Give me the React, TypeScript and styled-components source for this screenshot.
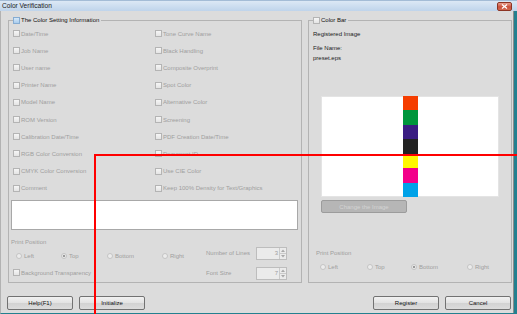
import styled, { createGlobalStyle } from 'styled-components'

const GlobalStyle = createGlobalStyle`
  html, body {
    margin: 0;
    padding: 0;
    background: #ffffff;
  }
  body {
    font-family: "Liberation Sans", Arial, sans-serif;
  }
  * {
    box-sizing: border-box;
  }
`

const leftItems = [
    'Date/Time',
    'Job Name',
    'User name',
    'Printer Name',
    'Model Name',
    'ROM Version',
    'Calibration Date/Time',
    'RGB Color Conversion',
    'CMYK Color Conversion',
    'Comment',
    'Tone Curve Name',
    'Black Handling',
    'Composite Overprint',
    'Spot Color',
    'Alternative Color',
    'Screening',
    'PDF Creation Date/Time',
    'Document ID',
    'Use CIE Color',
    'Keep 100% Density for Text/Graphics',
]

const barColors = ['#f53d00', '#00963c', '#3a1d82', '#222222', '#fff800', '#f3008a', '#00a2e8']

const positions = ['Left', 'Top', 'Bottom', 'Right']

function App() {
    return (
        <>
            <GlobalStyle />
            <Window>
                <TitleBar>
                    <span>Color Verification</span>
                    <CloseButton>
                        <svg width="7" height="5" viewBox="0 0 7 5">
                            <path d="M1 0.5 L6 4.5 M6 0.5 L1 4.5" stroke="#fff" strokeWidth="1.3" />
                        </svg>
                    </CloseButton>
                </TitleBar>
                <Frame>
                    <Body>
                        <Panels>
                            <Group $width={294} $padLeft={4} $padRight={3} $padBottom={1}>
                                <Legend>
                                    <CheckBox $accent />
                                    The Color Setting Information
                                </Legend>
                                <CheckGrid>
                                    {leftItems.map((item) => (
                                        <CheckItem key={item}>
                                            <CheckBox />
                                            {item}
                                        </CheckItem>
                                    ))}
                                </CheckGrid>
                                <CommentBox />
                                <LowerArea>
                                    <PositionColumn>
                                        <SectionLabel $indent={-2}>Print Position</SectionLabel>
                                        <RadioRow $columns="45px 46px 55px auto" $indent={3}>
                                            {positions.map((p) => (
                                                <RadioItem key={p}>
                                                    <Radio $checked={p === 'Top'} />
                                                    {p}
                                                </RadioItem>
                                            ))}
                                        </RadioRow>
                                        <OptionRow>
                                            <CheckBox />
                                            Background Transparency
                                        </OptionRow>
                                    </PositionColumn>
                                    <SpinGrid>
                                        <FieldLabel>Number of Lines</FieldLabel>
                                        <Spin>
                                            <SpinValue>3</SpinValue>
                                            <SpinArrows>
                                                <ArrowHalf>
                                                    <svg width="4" height="3" viewBox="0 0 4 3">
                                                        <path d="M0 3 L2 0.5 L4 3 Z" fill="#a8a8a8" />
                                                    </svg>
                                                </ArrowHalf>
                                                <ArrowHalf>
                                                    <svg width="4" height="3" viewBox="0 0 4 3">
                                                        <path d="M0 0 L2 2.5 L4 0 Z" fill="#a8a8a8" />
                                                    </svg>
                                                </ArrowHalf>
                                            </SpinArrows>
                                        </Spin>
                                        <FieldLabel>Font Size</FieldLabel>
                                        <Spin>
                                            <SpinValue>7</SpinValue>
                                            <SpinArrows>
                                                <ArrowHalf>
                                                    <svg width="4" height="3" viewBox="0 0 4 3">
                                                        <path d="M0 3 L2 0.5 L4 3 Z" fill="#a8a8a8" />
                                                    </svg>
                                                </ArrowHalf>
                                                <ArrowHalf>
                                                    <svg width="4" height="3" viewBox="0 0 4 3">
                                                        <path d="M0 0 L2 2.5 L4 0 Z" fill="#a8a8a8" />
                                                    </svg>
                                                </ArrowHalf>
                                            </SpinArrows>
                                        </Spin>
                                    </SpinGrid>
                                </LowerArea>
                            </Group>

                            <Group $width={204} $padLeft={4} $padRight={4} $padBottom={8}>
                                <Legend>
                                    <CheckBox />
                                    Color Bar
                                </Legend>
                                <InfoText $gap={5}>Registered Image</InfoText>
                                <InfoText $gap={6}>File Name:</InfoText>
                                <InfoText $gap={2}>preset.eps</InfoText>
                                <ImageColumn>
                                    <ImageArea>
                                        <Strip>
                                            {barColors.map((c) => (
                                                <Swatch key={c} $color={c} />
                                            ))}
                                        </Strip>
                                    </ImageArea>
                                    <DisabledButton>Change the Image</DisabledButton>
                                </ImageColumn>
                                <Spacer />
                                <SectionLabel $indent={3}>Print Position</SectionLabel>
                                <RadioRow $columns="47px 44px 56px auto" $indent={7}>
                                    {positions.map((p) => (
                                        <RadioItem key={p}>
                                            <Radio $checked={p === 'Bottom'} />
                                            {p}
                                        </RadioItem>
                                    ))}
                                </RadioRow>
                            </Group>
                        </Panels>
                        <Footer>
                            <ButtonGroup>
                                <PushButton>Help(F1)</PushButton>
                                <PushButton>Initialize</PushButton>
                            </ButtonGroup>
                            <ButtonGroup>
                                <PushButton>Register</PushButton>
                                <PushButton>Cancel</PushButton>
                            </ButtonGroup>
                        </Footer>
                    </Body>
                </Frame>
                <MarkH />
                <MarkV />
            </Window>
        </>
    )
}

export default App

const Window = styled.div`
    position: relative;
    width: 517px;
    height: 314px;
    display: flex;
    flex-direction: column;
    background: #dcdcdc;
    overflow: hidden;
    font-size: 6px;
    line-height: 8px;
`

const TitleBar = styled.div`
    height: 11px;
    flex: none;
    display: flex;
    align-items: center;
    justify-content: space-between;
    padding: 0 5px 0 2px;
    background: linear-gradient(#dce8f5, #bfd4eb);
    border-top: 1px solid #a4bcd6;
    color: #1b1b1b;
    font-size: 6.6px;
`

const CloseButton = styled.div`
    width: 15px;
    height: 9px;
    display: flex;
    align-items: center;
    justify-content: center;
    border: 1px solid #8c3424;
    border-radius: 2px;
    background: linear-gradient(#e9a08f, #c9503b 55%, #d36a52);
`

const Frame = styled.div`
    flex: 1;
    display: flex;
    flex-direction: column;
    border-left: 1px solid #b2b2b2;
    border-right: 3px solid #23808f;
    border-bottom: 1px solid #23808f;
    box-shadow: inset -1px 0 0 #8c8c8c;
`

const Body = styled.div`
    display: flex;
    flex-direction: column;
    padding: 5px 2px 0 7px;
`

const Panels = styled.div`
    display: flex;
    gap: 6px;
    height: 267px;
`

const Group = styled.fieldset<{ $width: number; $padLeft: number; $padRight: number; $padBottom: number }>`
    width: ${(p) => p.$width}px;
    min-width: 0;
    margin: 0;
    padding: 1px ${(p) => p.$padRight}px ${(p) => p.$padBottom}px ${(p) => p.$padLeft}px;
    border: 1px solid #b3b3b3;
    display: flex;
    flex-direction: column;
`

const Legend = styled.legend`
    display: flex;
    align-items: center;
    gap: 1px;
    height: 8px;
    margin: 0;
    padding: 0 2px 0 0;
    color: #111;
`

const CheckBox = styled.span<{ $accent?: boolean }>`
    width: 7px;
    height: 7px;
    flex: none;
    border: 1px solid ${(p) => (p.$accent ? '#86acd2' : '#b4b4b4')};
    background: ${(p) =>
        p.$accent ? 'linear-gradient(#d6e8f8, #a9cdee)' : 'linear-gradient(#f6f6f6, #e4e4e4)'};
`

const CheckGrid = styled.div`
    display: grid;
    grid-template-columns: 142px 1fr;
    grid-template-rows: repeat(10, 17.2px);
    grid-auto-flow: column;
`

const CheckItem = styled.div`
    display: flex;
    align-items: center;
    gap: 1px;
    color: #9e9e9e;
    white-space: nowrap;
`

const CommentBox = styled.div`
    margin: 3px 0 0 -2px;
    width: calc(100% + 2px);
    height: 30px;
    background: #ffffff;
    border: 1px solid #a8a8a8;
`

const LowerArea = styled.div`
    display: flex;
    align-items: flex-end;
    margin-top: 8px;
`

const PositionColumn = styled.div`
    width: 193px;
    display: flex;
    flex-direction: column;
`

const SectionLabel = styled.div<{ $indent: number }>`
    margin-left: ${(p) => p.$indent}px;
    height: 8px;
    color: #9e9e9e;
`

const RadioRow = styled.div<{ $columns: string; $indent: number }>`
    display: grid;
    grid-template-columns: ${(p) => p.$columns};
    align-items: center;
    height: 14px;
    margin-top: 3px;
    padding-left: ${(p) => p.$indent}px;
`

const RadioItem = styled.div`
    display: flex;
    align-items: center;
    gap: 2px;
    color: #9e9e9e;
`

const Radio = styled.span<{ $checked?: boolean }>`
    width: 6px;
    height: 6px;
    flex: none;
    border-radius: 50%;
    border: 1px solid #c4c4c4;
    background: ${(p) =>
        p.$checked ? 'radial-gradient(circle, #9a9a9a 0 1.3px, #eeeeee 1.6px)' : '#ececec'};
`

const OptionRow = styled.div`
    display: flex;
    align-items: center;
    gap: 1px;
    height: 14px;
    margin-top: 3px;
    color: #9e9e9e;
`

const SpinGrid = styled.div`
    display: grid;
    grid-template-columns: 50px 31px;
    grid-auto-rows: 13px;
    row-gap: 7px;
    align-items: center;
`

const FieldLabel = styled.div`
    color: #9e9e9e;
    white-space: nowrap;
`

const Spin = styled.div`
    height: 13px;
    display: flex;
    border: 1px solid #bdbdbd;
    background: #ebebeb;
`

const SpinValue = styled.span`
    flex: 1;
    text-align: right;
    padding-right: 1px;
    line-height: 11px;
    color: #9e9e9e;
`

const SpinArrows = styled.div`
    width: 7px;
    display: flex;
    flex-direction: column;
    border-left: 1px solid #cacaca;
`

const ArrowHalf = styled.div`
    flex: 1;
    display: flex;
    align-items: center;
    justify-content: center;
    & + & {
        border-top: 1px solid #cacaca;
    }
`

const InfoText = styled.div<{ $gap: number }>`
    margin-top: ${(p) => p.$gap}px;
    height: 8px;
    color: #1a1a1a;
`

const ImageColumn = styled.div`
    align-self: center;
    width: 178px;
    margin-top: 34px;
    display: flex;
    flex-direction: column;
    gap: 3px;
`

const ImageArea = styled.div`
    height: 101px;
    display: flex;
    justify-content: center;
    background: #ffffff;
    border: 1px solid #e4e4e4;
`

const Strip = styled.div`
    width: 15px;
    display: flex;
    flex-direction: column;
    margin-top: -1px;
    margin-bottom: -1px;
`

const Swatch = styled.div<{ $color: string }>`
    flex: 1;
    background: ${(p) => p.$color};
`

const DisabledButton = styled.div`
    width: 86px;
    height: 13px;
    display: flex;
    align-items: center;
    justify-content: center;
    background: #b6b6b6;
    border: 1px solid #9c9c9c;
    border-radius: 2px;
    color: #d4d4d4;
`

const Spacer = styled.div`
    flex: 1;
`

const Footer = styled.div`
    display: flex;
    justify-content: space-between;
    margin: 13px 0 0 -1px;
    padding-right: 1px;
`

const ButtonGroup = styled.div`
    display: flex;
    gap: 6px;
`

const PushButton = styled.button`
    width: 66px;
    height: 14px;
    padding: 0;
    font: inherit;
    font-size: 6px;
    color: #111;
    border: 1px solid #727272;
    border-radius: 2px;
    background: linear-gradient(#f1f1f1, #e2e2e2 50%, #d2d2d2 50%, #dcdcdc);
`

const MarkH = styled.div`
    position: absolute;
    left: 94px;
    top: 154px;
    width: 423px;
    height: 2px;
    background: #ff0000;
`

const MarkV = styled.div`
    position: absolute;
    left: 94px;
    top: 154px;
    width: 2px;
    height: 160px;
    background: #ff0000;
`
